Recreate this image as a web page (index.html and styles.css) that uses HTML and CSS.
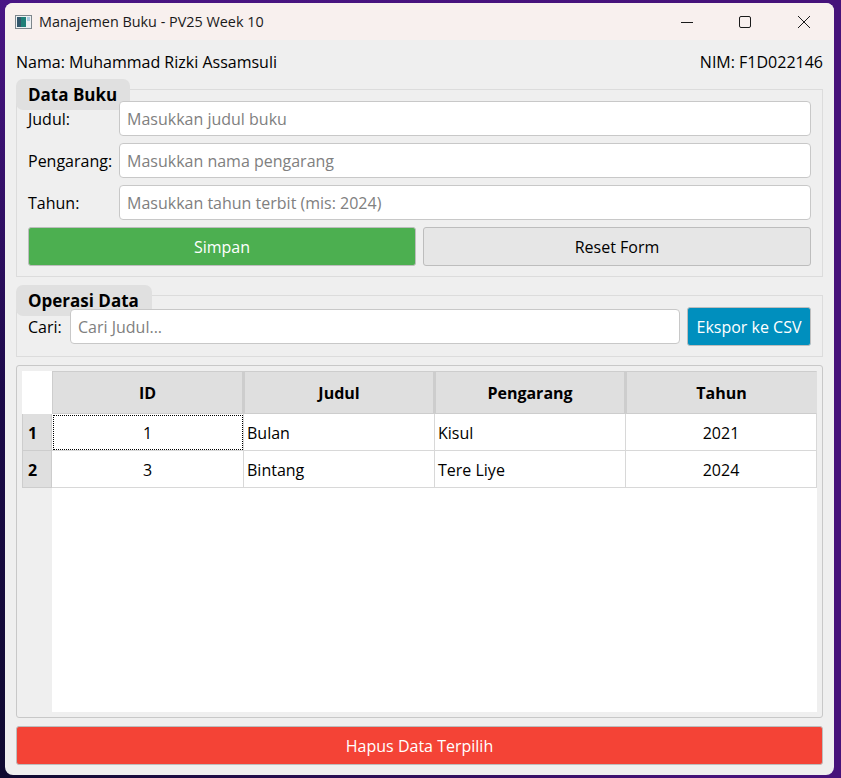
FILE: index.html
```html
<!DOCTYPE html>
<html lang="id">
<head>
    <meta charset="UTF-8">
    <meta name="viewport" content="width=device-width, initial-scale=1.0">
    <title>Manajemen Buku - PV25 Week 10</title>
    <link rel="stylesheet" href="styles.css">
</head>
<body>
    <div class="window">
        <div class="titlebar">
            <svg class="app-icon" width="17" height="14" viewBox="0 0 17 14">
                <rect x="0.5" y="0.5" width="16" height="13" fill="#eef1f3" stroke="#7d868c"/>
                <rect x="2" y="2" width="4" height="10" fill="#33566b"/>
                <rect x="6" y="2" width="5" height="10" fill="#1f7f78"/>
                <rect x="12" y="2" width="3" height="4" fill="#a9c9de"/>
            </svg>
            <span class="title-text">Manajemen Buku - PV25 Week 10</span>
            <div class="controls">
                <svg class="control" width="46" height="14" viewBox="0 0 46 14"><path d="M20 7.5h12" stroke="#1a1a1a" fill="none"/></svg>
                <svg class="control" width="46" height="14" viewBox="0 0 46 14"><rect x="18.5" y="1.5" width="11" height="11" rx="1.5" stroke="#1a1a1a" fill="none"/></svg>
                <svg class="control" width="46" height="14" viewBox="0 0 46 14"><path d="M17 1l12 12M29 1L17 13" stroke="#1a1a1a" fill="none"/></svg>
            </div>
        </div>

        <div class="content">
            <div class="info-row">
                <span>Nama: Muhammad Rizki Assamsuli</span>
                <span>NIM: F1D022146</span>
            </div>

            <fieldset class="group group-buku">
                <div class="group-title">Data Buku</div>
                <div class="form-row">
                    <label>Judul:</label>
                    <input type="text" placeholder="Masukkan judul buku">
                </div>
                <div class="form-row">
                    <label>Pengarang:</label>
                    <input type="text" placeholder="Masukkan nama pengarang">
                </div>
                <div class="form-row">
                    <label>Tahun:</label>
                    <input type="text" placeholder="Masukkan tahun terbit (mis: 2024)">
                </div>
                <div class="button-row">
                    <button class="btn btn-save">Simpan</button>
                    <button class="btn btn-reset">Reset Form</button>
                </div>
            </fieldset>

            <fieldset class="group group-operasi">
                <div class="group-title">Operasi Data</div>
                <div class="search-row">
                    <label>Cari:</label>
                    <input type="text" placeholder="Cari Judul...">
                    <button class="btn btn-export">Ekspor ke CSV</button>
                </div>
            </fieldset>

            <div class="table-frame">
                <div class="table-grid">
                    <div class="corner"></div>
                    <div class="head">ID</div>
                    <div class="head">Judul</div>
                    <div class="head">Pengarang</div>
                    <div class="head head-last">Tahun</div>

                    <div class="row-head">1</div>
                    <div class="cell center current">1</div>
                    <div class="cell">Bulan</div>
                    <div class="cell">Kisul</div>
                    <div class="cell center">2021</div>

                    <div class="row-head">2</div>
                    <div class="cell center">3</div>
                    <div class="cell">Bintang</div>
                    <div class="cell">Tere Liye</div>
                    <div class="cell center">2024</div>
                </div>
                <div class="table-empty">
                    <div class="empty-side"></div>
                    <div class="empty-main"></div>
                </div>
            </div>

            <button class="btn btn-delete">Hapus Data Terpilih</button>
        </div>
    </div>
</body>
</html>
```

FILE: styles.css
```css
* {
    box-sizing: border-box;
}
html, body {
    height: 100%;
}
body {
    margin: 0;
    padding: 3px 7px 3px 5px;
    overflow: hidden;
    font-family: "Open Sans", "Noto Sans", sans-serif;
    font-size: 16px;
    color: #000;
    background:
        linear-gradient(90deg, rgba(70, 18, 122, 0) 0%, rgba(70, 18, 122, 1) 85%),
        linear-gradient(180deg, #4a1585 0%, #1c0a4a 50%, #0f0a30 100%);
}
.window {
    height: 772px;
    background-color: #efefef;
    border-radius: 8px;
    overflow: hidden;
}
.titlebar {
    display: flex;
    align-items: center;
    height: 37px;
    padding-left: 10px;
    background-color: #f8f0ee;
    color: #1a1a1a;
    font-size: 14.4px;
}
.app-icon {
    margin-right: 7px;
}
.controls {
    display: flex;
    margin-left: auto;
    padding-right: 7px;
}
.control {
    margin-left: 14px;
}
.content {
    padding: 0 11px;
}
.info-row {
    display: flex;
    justify-content: space-between;
    align-items: flex-start;
    height: 49px;
    padding-top: 11px;
}
.group {
    position: relative;
    margin: 0;
    min-width: 0;
    border: 1px solid #dcdcdc;
    padding: 11px 11px 0;
}
.group-buku {
    height: 188px;
}
.group-operasi {
    height: 62px;
    margin-top: 18px;
    padding-top: 13px;
}
.group-title {
    position: absolute;
    left: -1px;
    top: -11px;
    height: 31px;
    padding: 5px 13px 0 12px;
    background-color: #e0e0e0;
    border-radius: 7px 7px 0 7px;
    font-size: 17px;
    line-height: 22px;
    font-weight: 700;
}
.form-row {
    display: flex;
    align-items: center;
    margin-bottom: 7px;
}
.form-row label {
    width: 91px;
    flex: none;
}
input {
    display: block;
    flex: 1;
    position: relative;
    min-width: 0;
    height: 35px;
    padding: 0 7px;
    border: 1px solid #c8c8c8;
    border-radius: 4px;
    background-color: #fff;
    font-family: inherit;
    font-size: 16px;
}
input::placeholder {
    color: #808080;
    opacity: 1;
}
.button-row {
    display: flex;
    gap: 7px;
}
.btn {
    display: block;
    height: 39px;
    border: 1px solid #bdbdbd;
    border-radius: 3px;
    font-family: inherit;
    font-size: 16px;
    cursor: pointer;
}
.button-row .btn {
    flex: 1;
}
.btn-save {
    background-color: #4caf50;
    color: #fff;
}
.btn-reset {
    background-color: #e6e6e6;
    color: #000;
}
.search-row {
    display: flex;
    align-items: center;
    gap: 7px;
}
.search-row label {
    flex: none;
    width: 35px;
}
.btn-export {
    flex: none;
    width: 124px;
    margin-top: -2px;
    margin-bottom: -2px;
    padding: 0;
    background-color: #008fbe;
    color: #fff;
}
.table-frame {
    height: 353px;
    margin-top: 8px;
    padding: 5px;
    border: 1px solid #c8c8c8;
    border-radius: 3px;
}
.table-grid {
    display: grid;
    grid-template-columns: 30px 192px 191px 191px 191px;
    grid-template-rows: 43px 37px 37px;
    background-color: #fff;
}
.corner {
    background-color: #fff;
}
.head {
    display: flex;
    align-items: center;
    justify-content: center;
    background-color: #dfdfdf;
    border: 1px solid #cdcdcd;
    border-right-width: 2px;
    font-weight: 700;
}
.head-last {
    border-right-width: 1px;
    border-right-color: #dfdfdf;
}
.row-head {
    display: flex;
    align-items: center;
    padding-left: 5px;
    padding-top: 1px;
    background-color: #dfdfdf;
    border: 1px solid #cdcdcd;
    border-top: 0;
    font-weight: 700;
}
.cell {
    display: flex;
    align-items: center;
    padding-left: 3px;
    padding-top: 1px;
    background-color: #fff;
    border-right: 1px solid #d8d8d8;
    border-bottom: 1px solid #d8d8d8;
}
.center {
    justify-content: center;
    padding-left: 0;
}
.current {
    outline: 1px dotted #000;
    outline-offset: -2px;
}
.table-empty {
    display: flex;
    height: 224px;
}
.empty-side {
    width: 30px;
}
.empty-main {
    flex: 1;
    background-color: #fff;
}
.btn-delete {
    width: 100%;
    margin-top: 8px;
    background-color: #f44336;
    color: #fff;
}
```
